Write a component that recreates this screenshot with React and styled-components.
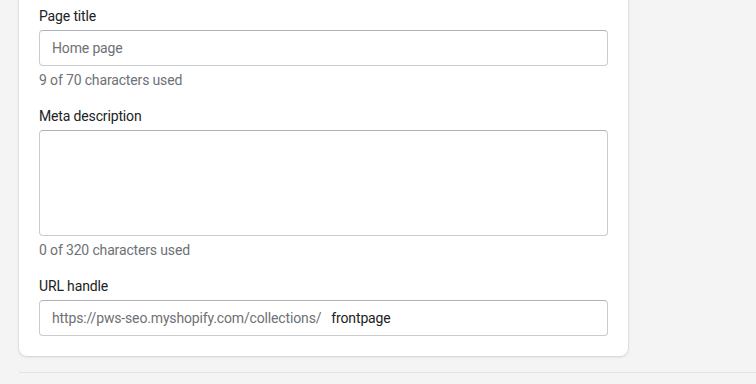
import React from 'react';
import styled, { createGlobalStyle } from 'styled-components';

const GlobalStyle = createGlobalStyle`
  html, body {
    margin: 0;
    padding: 0;
    background: #f4f4f4;
    overflow: hidden;
  }
  body {
    font-family: "Segoe UI", Roboto, "Noto Sans", sans-serif;
    font-size: 14px;
    line-height: 20px;
    letter-spacing: -0.15px;
    color: #202223;
  }
`;

const Page = styled.div`
  width: 756px;
  height: 384px;
  display: flex;
  flex-direction: column;
  padding-left: 19px;
  box-sizing: border-box;
`;

// card top is scrolled out of view, only the lower part shows
const Card = styled.section`
  width: 609px;
  margin-top: -14px;
  padding: 20px;
  box-sizing: border-box;
  background: #ffffff;
  border-radius: 0 0 8px 8px;
  box-shadow: 0 0 0 1px rgba(63, 63, 68, 0.05), 0 1px 3px rgba(63, 63, 68, 0.15);
  display: flex;
  flex-direction: column;
  gap: 16px;
`;

const Field = styled.div`
  display: flex;
  flex-direction: column;
`;

const Label = styled.label`
  display: block;
  margin-bottom: 4px;
  color: #202223;
`;

const InputBox = styled.div`
  display: flex;
  align-items: center;
  height: ${(p) => p.$height || 36}px;
  box-sizing: border-box;
  padding: 0 12px;
  background: #fff;
  border: 1px solid #c9cccf;
  border-top-color: #aeb4b9;
  border-radius: 4px;
`;

const Value = styled.span`
  color: ${(p) => (p.$muted ? '#6d7175' : '#202223')};
  margin-right: ${(p) => p.$gap || 0}px;
  white-space: nowrap;
`;

const Help = styled.div`
  margin-top: 4px;
  color: #6d7175;
`;

const Divider = styled.hr`
  margin: 16px 0 0;
  border: none;
  border-top: 1px solid #e1e3e5;
  width: 100%;
`;

export default function App() {
  return (
    <>
      <GlobalStyle />
      <Page>
        <Card>
          <Field>
            <Label>Page title</Label>
            <InputBox>
              <Value $muted>Home page</Value>
            </InputBox>
            <Help>9 of 70 characters used</Help>
          </Field>
          <Field>
            <Label>Meta description</Label>
            <InputBox $height={106} />
            <Help>0 of 320 characters used</Help>
          </Field>
          <Field>
            <Label>URL handle</Label>
            <InputBox>
              <Value $muted $gap={10}>https://pws-seo.myshopify.com/collections/</Value>
              <Value>frontpage</Value>
            </InputBox>
          </Field>
        </Card>
        <Divider />
      </Page>
    </>
  );
}
